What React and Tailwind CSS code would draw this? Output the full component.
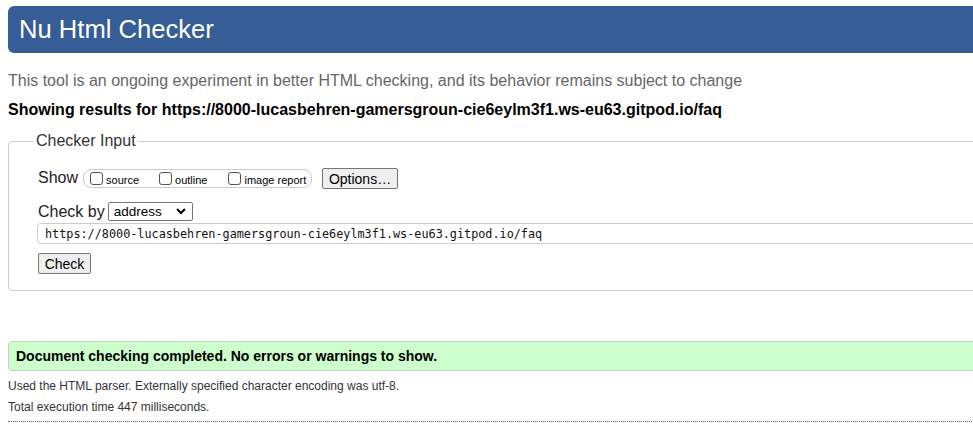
import React from 'react';

function Box({ label }) {
    return (
        <label className="flex items-center shrink-0 whitespace-nowrap">
            <span className="inline-block shrink-0 w-[13px] h-[13px] border border-[#555] rounded-[3px] bg-white" />
            <span className="ml-[3px] text-[11px] leading-[13px] mt-[3px]">{label}</span>
        </label>
    );
}

function App() {
    const url = 'https://8000-lucasbehren-gamersgroun-cie6eylm3f1.ws-eu63.gitpod.io/faq';

    return (
        <div className="w-full min-h-[441px] overflow-hidden bg-white text-black font-['Liberation_Sans',Arial,sans-serif]">
            <div className="w-[1200px] pl-[8px]">
                {/* Title bar */}
                <h1 className="mt-[6px] h-[47px] flex items-center pl-[11px] pb-[1px] rounded-l-[6px] bg-[#365d95] text-white text-[25.6px] leading-[30px]">
                    Nu Html Checker
                </h1>

                <p className="mt-[19px] text-[16px] leading-[18px] text-[#666]">
                    This tool is an ongoing experiment in better HTML checking, and its behavior remains subject to change
                </p>
                <p className="mt-[11px] text-[16px] leading-[18px] font-bold">
                    Showing results for {url}
                </p>

                {/* Checker input form */}
                <fieldset className="mt-[13px] border border-[#ccc] rounded-l-[4px] pl-[29px] pb-[16px]">
                    <legend className="-ml-[4px] px-[2px] text-[16px] leading-[18px] text-[#333]">Checker Input</legend>

                    <div className="mt-[18px] flex items-center h-[21px]">
                        <span className="text-[16px] leading-[18px] text-[#222] -mt-[1px]">Show</span>
                        <div className="ml-[5px] w-[229px] shrink-0 h-[19px] flex items-center pl-[6px] border border-[#ccc] rounded-[8px]">
                            <Box label="source" />
                            <div className="ml-[20px]"><Box label="outline" /></div>
                            <div className="ml-[21px]"><Box label="image report" /></div>
                        </div>
                        <button className="ml-[10px] w-[76px] h-[21px] border border-[#767676] rounded-[2px] bg-[#efefef] text-[14px] leading-[16px] text-black">
                            Options…
                        </button>
                    </div>

                    <div className="mt-[12px] flex items-center h-[21px]">
                        <span className="text-[16px] leading-[18px] text-[#222]">Check by</span>
                        <div className="ml-[3px] w-[85px] h-[19px] flex items-center justify-between pl-[5px] pr-[6px] border border-[#767676] rounded-[2px] bg-white">
                            <span className="text-[13.5px] leading-[16px]">address</span>
                            <svg width="10" height="7" viewBox="0 0 10 7" fill="none" stroke="#000" strokeWidth="2">
                                <path d="M1 1l4 4 4-4" />
                            </svg>
                        </div>
                    </div>

                    <div className="mt-[1px] -ml-[1px] h-[21px] flex items-center pl-[7px] border border-[#ccc] rounded-l-[4px] bg-white">
                        <span className="font-['DejaVu_Sans_Mono',monospace] text-[11.8px] leading-[14px] text-[#111]">{url}</span>
                    </div>

                    <button className="mt-[9px] block w-[53px] h-[21px] border border-[#767676] rounded-[2px] bg-[#efefef] text-[14px] leading-[16px] text-black">
                        Check
                    </button>
                </fieldset>

                {/* Result */}
                <div className="mt-[50px] h-[30px] flex items-center pl-[7px] border border-[#ccc] rounded-l-[4px] bg-[#ccffcc]">
                    <span className="text-[14px] leading-[16px] font-bold">
                        Document checking completed. No errors or warnings to show.
                    </span>
                </div>

                <p className="mt-[8px] text-[12px] leading-[14px] text-[#333]">
                    Used the HTML parser. Externally specified character encoding was utf-8.
                </p>
                <p className="mt-[7px] text-[12px] leading-[14px] text-[#333]">
                    Total execution time 447 milliseconds.
                </p>
                <div className="mt-[7px] border-b border-dotted border-[#666]" />
            </div>
        </div>
    );
}

export default App;
